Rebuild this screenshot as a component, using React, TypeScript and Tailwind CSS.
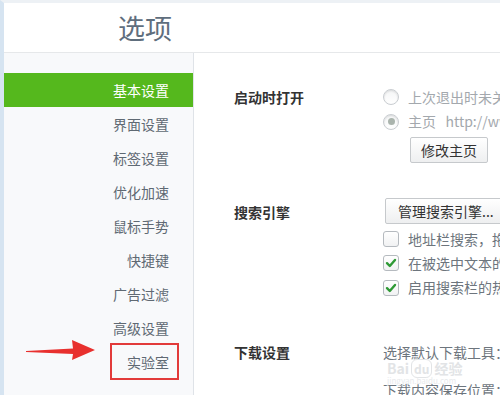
import React from "react";

const font = { fontFamily: '"Noto Sans CJK SC", "Noto Sans", sans-serif' };

const menu = ["基本设置", "界面设置", "标签设置", "优化加速", "鼠标手势", "快捷键", "广告过滤", "高级设置", "实验室"];

function Radio({ checked }: { checked?: boolean }) {
  return (
    <span className="flex h-[16px] w-[16px] shrink-0 items-center justify-center rounded-full border border-[#c9cdd1] bg-gradient-to-b from-[#f4f5f6] to-white shadow-[inset_0_1px_2px_rgba(0,0,0,0.12)]">
      {checked && <span className="h-[7px] w-[7px] rounded-full bg-[#aab4ad]" />}
    </span>
  );
}

function Check({ checked }: { checked?: boolean }) {
  return (
    <span className="flex h-[16px] w-[16px] shrink-0 items-center justify-center rounded-[3px] border border-[#b5babf] bg-gradient-to-b from-white to-[#f1f2f3]">
      {checked && (
        <svg width="12" height="12" viewBox="0 0 12 12">
          <path d="M2 6.2 L4.8 9 L10 3" fill="none" stroke="#2f9a36" strokeWidth="2.4" strokeLinecap="round" strokeLinejoin="round" />
        </svg>
      )}
    </span>
  );
}

export default function App() {
  return (
    <div className="relative h-[395px] w-[500px] overflow-hidden border-l-[4px] border-t-[3px] border-l-[#d6e4f1] border-t-[#edf1f5] bg-white" style={font}>
      <div className="flex h-[50px] items-center border-b border-[#e6e8ea] pl-[114px]">
        <span className="text-[27px] leading-none text-[#5f6e7d]">选项</span>
      </div>
      <div className="flex h-[342px]">
        <div className="relative w-[190px] shrink-0 border-r border-[#dfe3e8] bg-[#f8f9fb] pt-[20px]">
          {menu.map((m, i) => (
            <div
              key={m}
              className={
                i === 0
                  ? "flex h-[34px] items-center justify-end bg-[#55b81d] pr-[24px] text-[14px] text-white"
                  : "flex h-[34px] items-center justify-end pr-[24px] text-[14px] text-[#5f6973]"
              }
            >
              {m}
            </div>
          ))}
          <div className="absolute left-[106px] top-[290px] h-[37px] w-[69px] border-[2.5px] border-[#e23a3a]" />
          <svg className="absolute left-[18px] top-[287px]" width="80" height="24" viewBox="0 0 80 24">
            <path d="M4 11 L51 8.5 L50 0 L73 10 L50 20 L51 14 L4 12 Z" fill="#e8302e" />
          </svg>
        </div>
        <div className="flex-1 pl-[40px] text-[14px]">
          <div className="mt-[32px] flex">
            <div className="w-[149px] shrink-0 pt-[2px] font-bold leading-[20px] text-[#333]">启动时打开</div>
            <div className="flex flex-col whitespace-nowrap">
              <div className="flex h-[24px] items-center gap-[9px] text-[#a3a8ad]">
                <Radio />
                <span>上次退出时未关闭的页面</span>
              </div>
              <div className="flex h-[25px] items-center gap-[9px] text-[#a3a8ad]">
                <Radio checked />
                <span>主页&nbsp;&nbsp;&nbsp;http://www.2345.com</span>
              </div>
              <button className="ml-[27px] mt-[3px] h-[26px] w-[78px] rounded-[2px] border border-[#c6c9cc] bg-gradient-to-b from-white to-[#eeeff0] text-[14px] text-[#333]">
                修改主页
              </button>
            </div>
          </div>
          <div className="mt-[35px] flex">
            <div className="w-[149px] shrink-0 pt-[4px] font-bold leading-[20px] text-[#333]">搜索引擎</div>
            <div className="flex flex-col whitespace-nowrap">
              <button className="ml-[2px] h-[26px] w-[130px] rounded-[2px] border border-[#c6c9cc] bg-gradient-to-b from-white to-[#eeeff0] pl-[12px] text-left text-[14px] text-[#333]">
                管理搜索引擎...
              </button>
              <div className="mt-[3px] flex h-[24px] items-center gap-[9px] text-[#6d757d]">
                <Check />
                <span>地址栏搜索，拖拽搜索使用默认搜索引擎</span>
              </div>
              <div className="flex h-[24px] items-center gap-[9px] text-[#6d757d]">
                <Check checked />
                <span>在被选中文本的上方显示搜索图标</span>
              </div>
              <div className="flex h-[25px] items-center gap-[9px] text-[#6d757d]">
                <Check checked />
                <span>启用搜索栏的热词推荐</span>
              </div>
            </div>
          </div>
          <div className="mt-[40px] flex">
            <div className="w-[149px] shrink-0 font-bold leading-[24px] text-[#333]">下载设置</div>
            <div className="relative flex flex-col whitespace-nowrap text-[#6d757d]">
              <div className="h-[24px] leading-[24px]">选择默认下载工具：</div>
              <div className="mt-[14px] h-[24px] leading-[24px]">下载内容保存位置：</div>
              <div className="pointer-events-none absolute left-[4px] top-[21px] flex flex-col leading-none text-[#e2e4e6]">
                <span className="text-[14px] font-bold">Bai<span className="mx-[2px] rounded-[6px] border border-[#e2e4e6] px-[2px] text-[12px]">du</span>经验</span>
                <span className="mt-[2px] text-[8px] text-[#e8eaec]">jingyan.baidu.com</span>
              </div>
            </div>
          </div>
        </div>
      </div>
    </div>
  );
}
